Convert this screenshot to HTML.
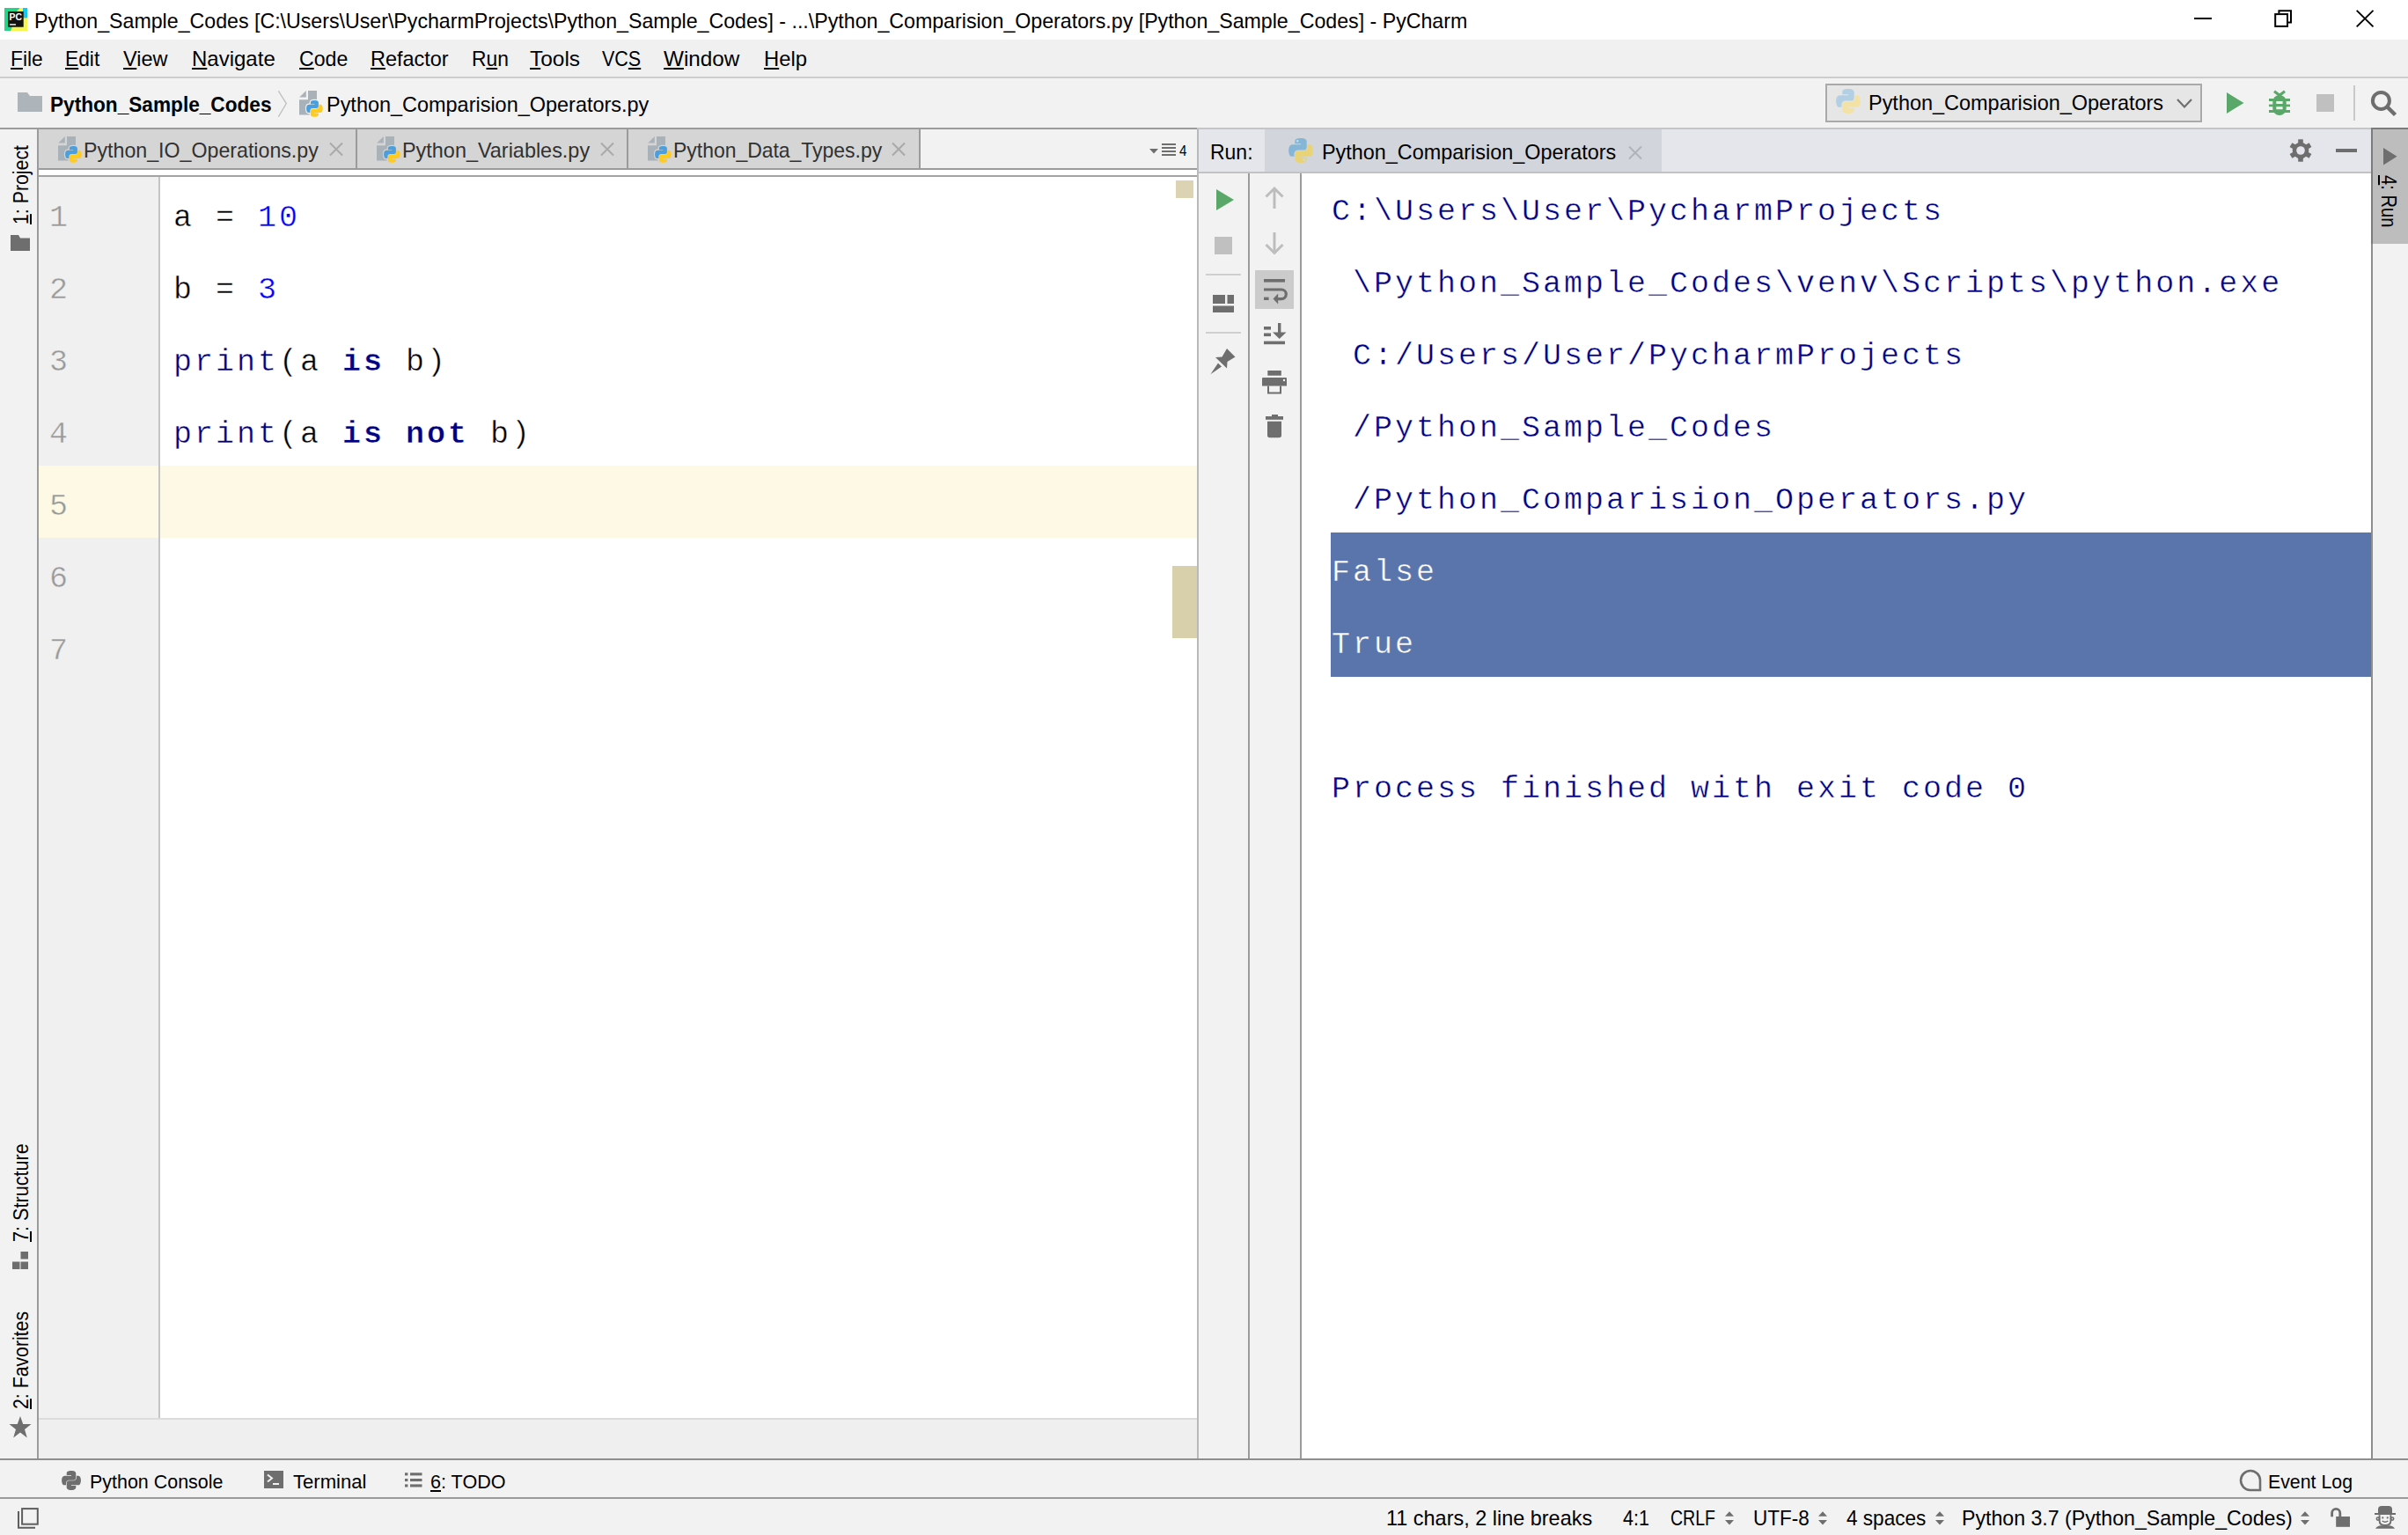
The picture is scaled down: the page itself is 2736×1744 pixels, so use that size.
<!DOCTYPE html>
<html><head><meta charset="utf-8">
<style>
*{box-sizing:border-box;margin:0;padding:0}
html,body{width:2736px;height:1744px;overflow:hidden;background:#f2f2f2}
body{position:relative;font-family:"Liberation Sans",sans-serif;color:#000}
.a{position:absolute}
.t{position:absolute;white-space:pre;line-height:1;transform-origin:0 0}
.m{font-family:"Liberation Mono",monospace}
.u{text-decoration:underline;text-underline-offset:2px;text-decoration-thickness:2px}
svg{position:absolute;overflow:visible}
</style></head><body>

<!-- TITLE BAR -->
<div class="a" style="left:0;top:0;width:2736px;height:45px;background:#fff"></div>
<svg style="left:5px;top:9px" width="26" height="26" viewBox="0 0 26 26">
<rect width="26" height="26" fill="#25d389"/>
<polygon points="14.2,3.8 17.6,0 26,0 26,26 7,26 8.6,21.8" fill="#f5f54e"/>
<rect x="21" y="0" width="5" height="11.4" fill="#14c8ee"/>
<rect x="4" y="4" width="17.7" height="17.7" fill="#121212"/>
<text x="5.6" y="13.6" font-family="Liberation Sans" font-weight="bold" font-size="10.4" fill="#fff">PC</text>
<rect x="6.1" y="18.2" width="6.9" height="1.4" fill="#fff"/>
</svg>
<!-- window controls -->
<div class="a" style="left:2493px;top:20px;width:20px;height:2px;background:#000"></div>
<svg style="left:2583px;top:10px" width="23" height="23" viewBox="0 0 23 23"><rect x="2.2" y="6.1" width="13.8" height="13.8" fill="none" stroke="#000" stroke-width="2"/><path d="M6.4 5.1V2.2H20V15.6H17" fill="none" stroke="#000" stroke-width="2"/></svg>
<svg style="left:2677px;top:11px" width="20" height="20" viewBox="0 0 20 20"><path d="M0.7 0.9L19.5 19.4M19.5 0.9L0.7 19.4" stroke="#000" stroke-width="1.9"/></svg>

<!-- MENU BAR -->
<div class="a" style="left:0;top:45px;width:2736px;height:42px;background:#f0f0f0"></div>
<div class="a" style="left:0;top:87px;width:2736px;height:2px;background:#cdcdcd"></div>

<!-- NAV BAR -->
<div class="a" style="left:0;top:89px;width:2736px;height:56px;background:#f2f2f2"></div>
<div class="a" style="left:0;top:145px;width:1360px;height:2px;background:#9b9b9b"></div>
<div class="a" style="left:1360px;top:145px;width:1334px;height:2px;background:#c4c5c8"></div>
<div class="a" style="left:2694px;top:145px;width:42px;height:2px;background:#7c7c7c"></div>

<!-- MAIN -->
<!-- left stripe -->
<div class="a" style="left:0;top:147px;width:43px;height:1510px;background:#f2f2f2"></div>
<div class="a" style="left:42px;top:147px;width:2px;height:1510px;background:#9b9b9b"></div>

<!-- editor tabs strip -->
<div class="a" style="left:44px;top:147px;width:1316px;height:44px;background:#f2f2f2"></div>
<div class="a" style="left:44px;top:147px;width:1001px;height:44px;background:#d5d5d5"></div>
<div class="a" style="left:44px;top:191px;width:1316px;height:2px;background:#9b9b9b"></div>
<div class="a" style="left:44px;top:193px;width:1316px;height:6px;background:#fff"></div>
<div class="a" style="left:44px;top:199px;width:1316px;height:2px;background:#a3a3a3"></div>
<div class="a" style="left:404px;top:147px;width:2px;height:44px;background:#9b9b9b"></div>
<div class="a" style="left:712px;top:147px;width:2px;height:44px;background:#9b9b9b"></div>
<div class="a" style="left:1044px;top:147px;width:2px;height:44px;background:#9b9b9b"></div>

<!-- editor content -->
<div class="a" style="left:44px;top:201px;width:136px;height:1410px;background:#f0f0f0"></div>
<div class="a" style="left:180px;top:201px;width:2px;height:1410px;background:#c4c4c4"></div>
<div class="a" style="left:182px;top:201px;width:1178px;height:1410px;background:#fff"></div>
<!-- current line -->
<div class="a" style="left:44px;top:529px;width:136px;height:82px;background:#fef9e4"></div>
<div class="a" style="left:182px;top:529px;width:1178px;height:82px;background:#fef9e4"></div>
<!-- h-scroll area -->
<div class="a" style="left:44px;top:1611px;width:1316px;height:2px;background:#dcdcdc"></div>
<div class="a" style="left:44px;top:1613px;width:1316px;height:44px;background:#efefef"></div>

<!-- divider -->
<div class="a" style="left:1360px;top:147px;width:2px;height:1510px;background:#b9b9b9"></div>

<!-- RUN PANEL -->
<div class="a" style="left:1362px;top:147px;width:1332px;height:48px;background:#e4e6ec"></div>
<div class="a" style="left:1437px;top:147px;width:451px;height:48px;background:#d2d5dc"></div>
<div class="a" style="left:1362px;top:195px;width:1332px;height:2px;background:#c2c2c2"></div>
<div class="a" style="left:1362px;top:197px;width:56px;height:1460px;background:#f2f2f2"></div>
<div class="a" style="left:1418px;top:197px;width:2px;height:1460px;background:#9b9b9b"></div>
<div class="a" style="left:1420px;top:197px;width:57px;height:1460px;background:#f2f2f2"></div>
<div class="a" style="left:1477px;top:197px;width:2px;height:1460px;background:#9b9b9b"></div>
<div class="a" style="left:1479px;top:197px;width:1215px;height:1460px;background:#fff"></div>
<!-- selection -->
<div class="a" style="left:1512px;top:605px;width:1182px;height:164px;background:#5a75ab"></div>

<!-- right stripe -->
<div class="a" style="left:2694px;top:147px;width:2px;height:1510px;background:#8e8e8e"></div>
<div class="a" style="left:2694px;top:147px;width:2px;height:130px;background:#7c7c7c"></div>
<div class="a" style="left:2696px;top:147px;width:40px;height:130px;background:#bdbdbd"></div>

<!-- bottom borders -->
<div class="a" style="left:0;top:1657px;width:2736px;height:2px;background:#8e8e8e"></div>
<div class="a" style="left:0;top:1701px;width:2736px;height:2px;background:#9b9b9b"></div>

<svg style="left:20px;top:105px" width="28" height="22" viewBox="0 0 28 22"><path d="M0 0H11L14 4H28V22H0Z" fill="#adb5bb"/></svg><svg style="left:315px;top:103px" width="12" height="30" viewBox="0 0 12 30"><path d="M1.4 0.3L10.3 14.6L1.4 29.6" fill="none" stroke="#bfbfbf" stroke-width="1.3"/></svg><svg style="left:334px;top:98px" width="32" height="36" viewBox="0 0 32 36"><polygon points="6.2,12.5 13.8,5 13.8,12.5" fill="#aab2b9"/><polygon points="16,5 26,5 26,32.6 6,32.6 6,15.2 16,15.2" fill="#aab2b9"/></svg><svg style="left:347.6px;top:114.2px" width="18.8" height="18.8" viewBox="0 0 111 112"><path d="M54.92,0 C50.33,0.02 45.96,0.41 42.11,1.09 C30.77,3.09 28.71,7.29 28.71,15.03 L28.71,25.25 L55.51,25.25 L55.51,28.66 L18.65,28.66 C10.86,28.66 4.04,33.34 1.91,42.25 C-0.55,52.46 -0.66,58.83 1.91,69.5 C3.81,77.44 8.35,83.1 16.14,83.1 L25.35,83.1 L25.35,70.85 C25.35,62 33.01,54.19 42.11,54.19 L68.88,54.19 C76.33,54.19 82.28,48.05 82.28,40.57 L82.28,15.03 C82.28,7.76 76.15,2.3 68.88,1.09 C64.28,0.32 59.5,-0.02 54.92,0 Z" fill="#f2f2f2" stroke="#f2f2f2" stroke-width="14.2"/><path d="M85.64,28.66 L85.64,40.57 C85.64,49.8 77.81,57.57 68.88,57.57 L42.11,57.57 C34.78,57.57 28.71,63.84 28.71,71.18 L28.71,96.72 C28.71,103.99 35.03,108.26 42.11,110.34 C50.59,112.83 58.73,113.28 68.88,110.34 C75.62,108.39 82.28,104.46 82.28,96.72 L82.28,86.5 L55.51,86.5 L55.51,83.1 L95.68,83.1 C103.47,83.1 106.37,77.66 109.08,69.5 C111.88,61.09 111.76,53.01 109.08,42.25 C107.16,34.5 103.49,28.66 95.68,28.66 Z" fill="#f2f2f2" stroke="#f2f2f2" stroke-width="14.2"/><path d="M54.92,0 C50.33,0.02 45.96,0.41 42.11,1.09 C30.77,3.09 28.71,7.29 28.71,15.03 L28.71,25.25 L55.51,25.25 L55.51,28.66 L18.65,28.66 C10.86,28.66 4.04,33.34 1.91,42.25 C-0.55,52.46 -0.66,58.83 1.91,69.5 C3.81,77.44 8.35,83.1 16.14,83.1 L25.35,83.1 L25.35,70.85 C25.35,62 33.01,54.19 42.11,54.19 L68.88,54.19 C76.33,54.19 82.28,48.05 82.28,40.57 L82.28,15.03 C82.28,7.76 76.15,2.3 68.88,1.09 C64.28,0.32 59.5,-0.02 54.92,0 Z" fill="#4a9fdc"/><path d="M85.64,28.66 L85.64,40.57 C85.64,49.8 77.81,57.57 68.88,57.57 L42.11,57.57 C34.78,57.57 28.71,63.84 28.71,71.18 L28.71,96.72 C28.71,103.99 35.03,108.26 42.11,110.34 C50.59,112.83 58.73,113.28 68.88,110.34 C75.62,108.39 82.28,104.46 82.28,96.72 L82.28,86.5 L55.51,86.5 L55.51,83.1 L95.68,83.1 C103.47,83.1 106.37,77.66 109.08,69.5 C111.88,61.09 111.76,53.01 109.08,42.25 C107.16,34.5 103.49,28.66 95.68,28.66 Z" fill="#ffcb1f"/></svg><svg style="left:60px;top:150px" width="32" height="36" viewBox="0 0 32 36"><polygon points="6.2,12.5 13.8,5 13.8,12.5" fill="#aab2b9"/><polygon points="16,5 26,5 26,32.6 6,32.6 6,15.2 16,15.2" fill="#aab2b9"/></svg><svg style="left:73.6px;top:166.2px" width="18.8" height="18.8" viewBox="0 0 111 112"><path d="M54.92,0 C50.33,0.02 45.96,0.41 42.11,1.09 C30.77,3.09 28.71,7.29 28.71,15.03 L28.71,25.25 L55.51,25.25 L55.51,28.66 L18.65,28.66 C10.86,28.66 4.04,33.34 1.91,42.25 C-0.55,52.46 -0.66,58.83 1.91,69.5 C3.81,77.44 8.35,83.1 16.14,83.1 L25.35,83.1 L25.35,70.85 C25.35,62 33.01,54.19 42.11,54.19 L68.88,54.19 C76.33,54.19 82.28,48.05 82.28,40.57 L82.28,15.03 C82.28,7.76 76.15,2.3 68.88,1.09 C64.28,0.32 59.5,-0.02 54.92,0 Z" fill="#d5d5d5" stroke="#d5d5d5" stroke-width="14.2"/><path d="M85.64,28.66 L85.64,40.57 C85.64,49.8 77.81,57.57 68.88,57.57 L42.11,57.57 C34.78,57.57 28.71,63.84 28.71,71.18 L28.71,96.72 C28.71,103.99 35.03,108.26 42.11,110.34 C50.59,112.83 58.73,113.28 68.88,110.34 C75.62,108.39 82.28,104.46 82.28,96.72 L82.28,86.5 L55.51,86.5 L55.51,83.1 L95.68,83.1 C103.47,83.1 106.37,77.66 109.08,69.5 C111.88,61.09 111.76,53.01 109.08,42.25 C107.16,34.5 103.49,28.66 95.68,28.66 Z" fill="#d5d5d5" stroke="#d5d5d5" stroke-width="14.2"/><path d="M54.92,0 C50.33,0.02 45.96,0.41 42.11,1.09 C30.77,3.09 28.71,7.29 28.71,15.03 L28.71,25.25 L55.51,25.25 L55.51,28.66 L18.65,28.66 C10.86,28.66 4.04,33.34 1.91,42.25 C-0.55,52.46 -0.66,58.83 1.91,69.5 C3.81,77.44 8.35,83.1 16.14,83.1 L25.35,83.1 L25.35,70.85 C25.35,62 33.01,54.19 42.11,54.19 L68.88,54.19 C76.33,54.19 82.28,48.05 82.28,40.57 L82.28,15.03 C82.28,7.76 76.15,2.3 68.88,1.09 C64.28,0.32 59.5,-0.02 54.92,0 Z" fill="#4a9fdc"/><path d="M85.64,28.66 L85.64,40.57 C85.64,49.8 77.81,57.57 68.88,57.57 L42.11,57.57 C34.78,57.57 28.71,63.84 28.71,71.18 L28.71,96.72 C28.71,103.99 35.03,108.26 42.11,110.34 C50.59,112.83 58.73,113.28 68.88,110.34 C75.62,108.39 82.28,104.46 82.28,96.72 L82.28,86.5 L55.51,86.5 L55.51,83.1 L95.68,83.1 C103.47,83.1 106.37,77.66 109.08,69.5 C111.88,61.09 111.76,53.01 109.08,42.25 C107.16,34.5 103.49,28.66 95.68,28.66 Z" fill="#ffcb1f"/></svg><svg style="left:374px;top:162px" width="16" height="15" viewBox="0 0 16 15"><path d="M1 0.5L15 14.5M15 0.5L1 14.5" stroke="#a9a9a9" stroke-width="2"/></svg><svg style="left:422px;top:150px" width="32" height="36" viewBox="0 0 32 36"><polygon points="6.2,12.5 13.8,5 13.8,12.5" fill="#aab2b9"/><polygon points="16,5 26,5 26,32.6 6,32.6 6,15.2 16,15.2" fill="#aab2b9"/></svg><svg style="left:435.6px;top:166.2px" width="18.8" height="18.8" viewBox="0 0 111 112"><path d="M54.92,0 C50.33,0.02 45.96,0.41 42.11,1.09 C30.77,3.09 28.71,7.29 28.71,15.03 L28.71,25.25 L55.51,25.25 L55.51,28.66 L18.65,28.66 C10.86,28.66 4.04,33.34 1.91,42.25 C-0.55,52.46 -0.66,58.83 1.91,69.5 C3.81,77.44 8.35,83.1 16.14,83.1 L25.35,83.1 L25.35,70.85 C25.35,62 33.01,54.19 42.11,54.19 L68.88,54.19 C76.33,54.19 82.28,48.05 82.28,40.57 L82.28,15.03 C82.28,7.76 76.15,2.3 68.88,1.09 C64.28,0.32 59.5,-0.02 54.92,0 Z" fill="#d5d5d5" stroke="#d5d5d5" stroke-width="14.2"/><path d="M85.64,28.66 L85.64,40.57 C85.64,49.8 77.81,57.57 68.88,57.57 L42.11,57.57 C34.78,57.57 28.71,63.84 28.71,71.18 L28.71,96.72 C28.71,103.99 35.03,108.26 42.11,110.34 C50.59,112.83 58.73,113.28 68.88,110.34 C75.62,108.39 82.28,104.46 82.28,96.72 L82.28,86.5 L55.51,86.5 L55.51,83.1 L95.68,83.1 C103.47,83.1 106.37,77.66 109.08,69.5 C111.88,61.09 111.76,53.01 109.08,42.25 C107.16,34.5 103.49,28.66 95.68,28.66 Z" fill="#d5d5d5" stroke="#d5d5d5" stroke-width="14.2"/><path d="M54.92,0 C50.33,0.02 45.96,0.41 42.11,1.09 C30.77,3.09 28.71,7.29 28.71,15.03 L28.71,25.25 L55.51,25.25 L55.51,28.66 L18.65,28.66 C10.86,28.66 4.04,33.34 1.91,42.25 C-0.55,52.46 -0.66,58.83 1.91,69.5 C3.81,77.44 8.35,83.1 16.14,83.1 L25.35,83.1 L25.35,70.85 C25.35,62 33.01,54.19 42.11,54.19 L68.88,54.19 C76.33,54.19 82.28,48.05 82.28,40.57 L82.28,15.03 C82.28,7.76 76.15,2.3 68.88,1.09 C64.28,0.32 59.5,-0.02 54.92,0 Z" fill="#4a9fdc"/><path d="M85.64,28.66 L85.64,40.57 C85.64,49.8 77.81,57.57 68.88,57.57 L42.11,57.57 C34.78,57.57 28.71,63.84 28.71,71.18 L28.71,96.72 C28.71,103.99 35.03,108.26 42.11,110.34 C50.59,112.83 58.73,113.28 68.88,110.34 C75.62,108.39 82.28,104.46 82.28,96.72 L82.28,86.5 L55.51,86.5 L55.51,83.1 L95.68,83.1 C103.47,83.1 106.37,77.66 109.08,69.5 C111.88,61.09 111.76,53.01 109.08,42.25 C107.16,34.5 103.49,28.66 95.68,28.66 Z" fill="#ffcb1f"/></svg><svg style="left:682px;top:162px" width="16" height="15" viewBox="0 0 16 15"><path d="M1 0.5L15 14.5M15 0.5L1 14.5" stroke="#a9a9a9" stroke-width="2"/></svg><svg style="left:730px;top:150px" width="32" height="36" viewBox="0 0 32 36"><polygon points="6.2,12.5 13.8,5 13.8,12.5" fill="#aab2b9"/><polygon points="16,5 26,5 26,32.6 6,32.6 6,15.2 16,15.2" fill="#aab2b9"/></svg><svg style="left:743.6px;top:166.2px" width="18.8" height="18.8" viewBox="0 0 111 112"><path d="M54.92,0 C50.33,0.02 45.96,0.41 42.11,1.09 C30.77,3.09 28.71,7.29 28.71,15.03 L28.71,25.25 L55.51,25.25 L55.51,28.66 L18.65,28.66 C10.86,28.66 4.04,33.34 1.91,42.25 C-0.55,52.46 -0.66,58.83 1.91,69.5 C3.81,77.44 8.35,83.1 16.14,83.1 L25.35,83.1 L25.35,70.85 C25.35,62 33.01,54.19 42.11,54.19 L68.88,54.19 C76.33,54.19 82.28,48.05 82.28,40.57 L82.28,15.03 C82.28,7.76 76.15,2.3 68.88,1.09 C64.28,0.32 59.5,-0.02 54.92,0 Z" fill="#d5d5d5" stroke="#d5d5d5" stroke-width="14.2"/><path d="M85.64,28.66 L85.64,40.57 C85.64,49.8 77.81,57.57 68.88,57.57 L42.11,57.57 C34.78,57.57 28.71,63.84 28.71,71.18 L28.71,96.72 C28.71,103.99 35.03,108.26 42.11,110.34 C50.59,112.83 58.73,113.28 68.88,110.34 C75.62,108.39 82.28,104.46 82.28,96.72 L82.28,86.5 L55.51,86.5 L55.51,83.1 L95.68,83.1 C103.47,83.1 106.37,77.66 109.08,69.5 C111.88,61.09 111.76,53.01 109.08,42.25 C107.16,34.5 103.49,28.66 95.68,28.66 Z" fill="#d5d5d5" stroke="#d5d5d5" stroke-width="14.2"/><path d="M54.92,0 C50.33,0.02 45.96,0.41 42.11,1.09 C30.77,3.09 28.71,7.29 28.71,15.03 L28.71,25.25 L55.51,25.25 L55.51,28.66 L18.65,28.66 C10.86,28.66 4.04,33.34 1.91,42.25 C-0.55,52.46 -0.66,58.83 1.91,69.5 C3.81,77.44 8.35,83.1 16.14,83.1 L25.35,83.1 L25.35,70.85 C25.35,62 33.01,54.19 42.11,54.19 L68.88,54.19 C76.33,54.19 82.28,48.05 82.28,40.57 L82.28,15.03 C82.28,7.76 76.15,2.3 68.88,1.09 C64.28,0.32 59.5,-0.02 54.92,0 Z" fill="#4a9fdc"/><path d="M85.64,28.66 L85.64,40.57 C85.64,49.8 77.81,57.57 68.88,57.57 L42.11,57.57 C34.78,57.57 28.71,63.84 28.71,71.18 L28.71,96.72 C28.71,103.99 35.03,108.26 42.11,110.34 C50.59,112.83 58.73,113.28 68.88,110.34 C75.62,108.39 82.28,104.46 82.28,96.72 L82.28,86.5 L55.51,86.5 L55.51,83.1 L95.68,83.1 C103.47,83.1 106.37,77.66 109.08,69.5 C111.88,61.09 111.76,53.01 109.08,42.25 C107.16,34.5 103.49,28.66 95.68,28.66 Z" fill="#ffcb1f"/></svg><svg style="left:1013px;top:162px" width="16" height="15" viewBox="0 0 16 15"><path d="M1 0.5L15 14.5M15 0.5L1 14.5" stroke="#a9a9a9" stroke-width="2"/></svg><svg style="left:1306px;top:163px" width="44" height="16" viewBox="0 0 44 16"><polygon points="0,6 10,6 5,11.5" fill="#6e6e6e"/><rect x="14" y="0" width="16" height="2" fill="#6e6e6e"/><rect x="14" y="4" width="16" height="2" fill="#6e6e6e"/><rect x="14" y="8" width="16" height="2" fill="#6e6e6e"/><rect x="14" y="12" width="16" height="2" fill="#6e6e6e"/></svg><div class="a" style="left:1336px;top:205px;width:20px;height:20px;background:#dbd3b1"></div><div class="a" style="left:1332px;top:643px;width:28px;height:82px;background:#d8cfab"></div><div class="a" style="left:2074px;top:95px;width:428px;height:44px;background:#e6e6e6;border:2px solid #a9a9a9"></div><svg style="left:2086px;top:101px" width="28" height="28" viewBox="0 0 111 112"><path d="M54.92,0 C50.33,0.02 45.96,0.41 42.11,1.09 C30.77,3.09 28.71,7.29 28.71,15.03 L28.71,25.25 L55.51,25.25 L55.51,28.66 L18.65,28.66 C10.86,28.66 4.04,33.34 1.91,42.25 C-0.55,52.46 -0.66,58.83 1.91,69.5 C3.81,77.44 8.35,83.1 16.14,83.1 L25.35,83.1 L25.35,70.85 C25.35,62 33.01,54.19 42.11,54.19 L68.88,54.19 C76.33,54.19 82.28,48.05 82.28,40.57 L82.28,15.03 C82.28,7.76 76.15,2.3 68.88,1.09 C64.28,0.32 59.5,-0.02 54.92,0 Z" fill="#b3cfe4"/><path d="M85.64,28.66 L85.64,40.57 C85.64,49.8 77.81,57.57 68.88,57.57 L42.11,57.57 C34.78,57.57 28.71,63.84 28.71,71.18 L28.71,96.72 C28.71,103.99 35.03,108.26 42.11,110.34 C50.59,112.83 58.73,113.28 68.88,110.34 C75.62,108.39 82.28,104.46 82.28,96.72 L82.28,86.5 L55.51,86.5 L55.51,83.1 L95.68,83.1 C103.47,83.1 106.37,77.66 109.08,69.5 C111.88,61.09 111.76,53.01 109.08,42.25 C107.16,34.5 103.49,28.66 95.68,28.66 Z" fill="#f3e2a6"/></svg><svg style="left:2473px;top:112px" width="18" height="11" viewBox="0 0 18 11"><path d="M1 1L9 9.5L17 1" fill="none" stroke="#6e6e6e" stroke-width="2.2"/></svg><svg style="left:2530px;top:105px" width="20" height="24" viewBox="0 0 20 24"><polygon points="0,0 19.5,12 0,24" fill="#59a869"/></svg><svg style="left:2578px;top:103px" width="24" height="28" viewBox="0 0 24 28" fill="#59a869"><path d="M6 0.8L12 5.3L18 0.8" fill="none" stroke="#59a869" stroke-width="3.2"/><path d="M4.3 12.5A7.7 7.5 0 0 1 19.7 12.5V20.5A7.7 7.5 0 0 1 4.3 20.5Z"/><rect x="0" y="9" width="24" height="3"/><rect x="0" y="15.6" width="24" height="2.6"/><rect x="0" y="22" width="24" height="3"/><rect x="8.3" y="12" width="7.3" height="3" fill="#f2f2f2"/><rect x="8.3" y="18.2" width="7.3" height="3" fill="#f2f2f2"/></svg><div class="a" style="left:2632px;top:107px;width:20px;height:20px;background:#c0c0c0"></div><div class="a" style="left:2674px;top:97px;width:2px;height:40px;background:#c9c9c9"></div><svg style="left:2694px;top:103px" width="30" height="30" viewBox="0 0 30 30"><circle cx="11.4" cy="11.4" r="9.5" fill="none" stroke="#6e6e6e" stroke-width="4"/><path d="M18 18L27.5 27.5" stroke="#6e6e6e" stroke-width="4.5"/></svg><svg style="left:1464px;top:157px" width="28" height="28" viewBox="0 0 111 112"><path d="M54.92,0 C50.33,0.02 45.96,0.41 42.11,1.09 C30.77,3.09 28.71,7.29 28.71,15.03 L28.71,25.25 L55.51,25.25 L55.51,28.66 L18.65,28.66 C10.86,28.66 4.04,33.34 1.91,42.25 C-0.55,52.46 -0.66,58.83 1.91,69.5 C3.81,77.44 8.35,83.1 16.14,83.1 L25.35,83.1 L25.35,70.85 C25.35,62 33.01,54.19 42.11,54.19 L68.88,54.19 C76.33,54.19 82.28,48.05 82.28,40.57 L82.28,15.03 C82.28,7.76 76.15,2.3 68.88,1.09 C64.28,0.32 59.5,-0.02 54.92,0 Z" fill="#86b6d6"/><path d="M85.64,28.66 L85.64,40.57 C85.64,49.8 77.81,57.57 68.88,57.57 L42.11,57.57 C34.78,57.57 28.71,63.84 28.71,71.18 L28.71,96.72 C28.71,103.99 35.03,108.26 42.11,110.34 C50.59,112.83 58.73,113.28 68.88,110.34 C75.62,108.39 82.28,104.46 82.28,96.72 L82.28,86.5 L55.51,86.5 L55.51,83.1 L95.68,83.1 C103.47,83.1 106.37,77.66 109.08,69.5 C111.88,61.09 111.76,53.01 109.08,42.25 C107.16,34.5 103.49,28.66 95.68,28.66 Z" fill="#e8d477"/><path d="M40.42,8.22 C43.19,8.22 45.45,10.52 45.45,13.34 C45.45,16.16 43.19,18.43 40.42,18.43 C37.64,18.43 35.39,16.16 35.39,13.34 C35.39,10.52 37.64,8.22 40.42,8.22 Z" fill="#c8dcea"/><path d="M70.58,93.29 C73.36,93.29 75.61,95.56 75.61,98.38 C75.61,101.21 73.36,103.5 70.58,103.5 C67.81,103.5 65.55,101.21 65.55,98.38 C65.55,95.56 67.81,93.29 70.58,93.29 Z" fill="#c8dcea"/></svg><svg style="left:1850px;top:165.5px" width="16" height="15" viewBox="0 0 16 15"><path d="M1 0.5L15 14.5M15 0.5L1 14.5" stroke="#b0b3b6" stroke-width="1.9"/></svg><svg style="left:2601px;top:158px" width="26" height="26" viewBox="-13 -13 26 26"><g fill="#6e6e6e"><rect x="-2.8" y="-12.7" width="5.6" height="25.4"/><rect x="-2.8" y="-12.7" width="5.6" height="25.4" transform="rotate(60)"/><rect x="-2.8" y="-12.7" width="5.6" height="25.4" transform="rotate(120)"/><circle r="9.3"/></g><circle r="4.8" fill="#e4e6ec"/></svg><div class="a" style="left:2654px;top:169px;width:24px;height:4px;background:#6e6e6e"></div><svg style="left:2708px;top:168px" width="16" height="20" viewBox="0 0 16 20"><polygon points="0,0 15.5,9.7 0,19.4" fill="#6e6e6e"/></svg><svg style="left:1382px;top:215px" width="20" height="24" viewBox="0 0 20 24"><polygon points="0,0 20,12 0,24" fill="#59a869"/></svg><div class="a" style="left:1380px;top:269px;width:20px;height:20px;background:#c0c0c0"></div><div class="a" style="left:1370px;top:311px;width:40px;height:2px;background:#cfcfcf"></div><svg style="left:1378px;top:335px" width="24" height="20" viewBox="0 0 24 20" fill="#6e6e6e"><rect x="0" y="0" width="14" height="10"/><rect x="16.5" y="0" width="7.5" height="10"/><rect x="0" y="12.5" width="24" height="7.5"/></svg><div class="a" style="left:1370px;top:377px;width:40px;height:2px;background:#cfcfcf"></div><svg style="left:1375px;top:396px" width="30" height="30" viewBox="0 0 30 30" fill="#6e6e6e"><polygon points="19,0 28.5,9.5 19.5,15 19,22.5 6,10 13.5,9.5"/><polygon points="0.4,29.2 9,16.4 13,20.4"/></svg><svg style="left:1437px;top:212px" width="22" height="26" viewBox="0 0 22 26"><path d="M11 2V25M1.5 11.5L11 2L20.5 11.5" fill="none" stroke="#bdbdbd" stroke-width="3"/></svg><svg style="left:1437px;top:264px" width="22" height="26" viewBox="0 0 22 26"><path d="M11 0V23.5M1.5 14L11 23.5L20.5 14" fill="none" stroke="#bdbdbd" stroke-width="3"/></svg><div class="a" style="left:1426px;top:307px;width:44px;height:44px;background:#cbcbcb"></div><svg style="left:1436px;top:317px" width="28" height="30" viewBox="0 0 28 30" fill="#6e6e6e"><rect x="0" y="0" width="24" height="3.6"/><path d="M0 12H20A5.3 5.3 0 0 1 20 22.6H14.5" fill="none" stroke="#6e6e6e" stroke-width="3.2"/><polygon points="10.5,22.6 16.2,16.6 16.2,28.4"/><rect x="0" y="20.6" width="5.6" height="3.4"/></svg><svg style="left:1436px;top:367px" width="26" height="26" viewBox="0 0 26 26" fill="#6e6e6e"><rect x="0" y="4" width="8" height="3.6"/><rect x="0" y="11.5" width="8" height="3.6"/><rect x="0" y="20.6" width="24" height="3.6"/><rect x="16" y="0" width="3.4" height="13"/><polygon points="10,10.5 25.5,10.5 17.7,18"/></svg><svg style="left:1434px;top:421px" width="28" height="27" viewBox="0 0 28 27" fill="#6e6e6e"><rect x="6.3" y="0" width="15.5" height="5.7"/><path d="M1 8H27A1 1 0 0 1 28 9V17.5H0V9A1 1 0 0 1 1 8Z"/><circle cx="25" cy="11" r="1.2" fill="#f2f2f2"/><path d="M7 17.5V25.5H21V17.5" fill="none" stroke="#6e6e6e" stroke-width="2"/></svg><svg style="left:1438px;top:471px" width="21" height="27" viewBox="0 0 21 27" fill="#6e6e6e"><rect x="7" y="0" width="7" height="2"/><rect x="0" y="2" width="20" height="3.8"/><path d="M2 7.8H18V23.5Q18 26.2 15.3 26.2H4.7Q2 26.2 2 23.5Z"/></svg><svg style="left:12px;top:267px" width="22" height="18" viewBox="0 0 22 18"><path d="M0 0H9L11 3.5H22V18H0Z" fill="#6e6e6e"/></svg><svg style="left:14px;top:1422px" width="18" height="20" viewBox="0 0 18 20" fill="#6e6e6e"><rect x="9.5" y="0" width="8.5" height="8.5"/><rect x="0" y="11.5" width="8.5" height="8.5"/><rect x="9.5" y="11.5" width="8.5" height="8.5"/></svg><svg style="left:10px;top:1609px" width="26" height="25" viewBox="0 0 26 25"><polygon points="13,0 16.2,9.1 25.5,9.1 18,14.9 20.8,24.5 13,18.6 5.2,24.5 8,14.9 0.5,9.1 9.8,9.1" fill="#6e6e6e"/></svg><svg style="left:70px;top:1671px" width="22" height="22" viewBox="0 0 111 112"><path d="M54.92,0 C50.33,0.02 45.96,0.41 42.11,1.09 C30.77,3.09 28.71,7.29 28.71,15.03 L28.71,25.25 L55.51,25.25 L55.51,28.66 L18.65,28.66 C10.86,28.66 4.04,33.34 1.91,42.25 C-0.55,52.46 -0.66,58.83 1.91,69.5 C3.81,77.44 8.35,83.1 16.14,83.1 L25.35,83.1 L25.35,70.85 C25.35,62 33.01,54.19 42.11,54.19 L68.88,54.19 C76.33,54.19 82.28,48.05 82.28,40.57 L82.28,15.03 C82.28,7.76 76.15,2.3 68.88,1.09 C64.28,0.32 59.5,-0.02 54.92,0 Z" fill="#6e6e6e"/><path d="M85.64,28.66 L85.64,40.57 C85.64,49.8 77.81,57.57 68.88,57.57 L42.11,57.57 C34.78,57.57 28.71,63.84 28.71,71.18 L28.71,96.72 C28.71,103.99 35.03,108.26 42.11,110.34 C50.59,112.83 58.73,113.28 68.88,110.34 C75.62,108.39 82.28,104.46 82.28,96.72 L82.28,86.5 L55.51,86.5 L55.51,83.1 L95.68,83.1 C103.47,83.1 106.37,77.66 109.08,69.5 C111.88,61.09 111.76,53.01 109.08,42.25 C107.16,34.5 103.49,28.66 95.68,28.66 Z" fill="#6e6e6e"/></svg><svg style="left:300px;top:1671px" width="22" height="20" viewBox="0 0 22 20"><rect width="22" height="20" fill="#6e6e6e"/><path d="M4 4.5L9 8.5L4 12.5" fill="none" stroke="#f2f2f2" stroke-width="2"/><rect x="10" y="14" width="7" height="2" fill="#f2f2f2"/></svg><svg style="left:460px;top:1672px" width="20" height="18" viewBox="0 0 20 18" fill="#6e6e6e"><rect x="0" y="1.3" width="3.4" height="3.1"/><rect x="6" y="1.3" width="13.5" height="3.1"/><rect x="0" y="8" width="3.4" height="3.1"/><rect x="6" y="8" width="13.5" height="3.1"/><rect x="0" y="14.4" width="3.4" height="3.1"/><rect x="6" y="14.4" width="13.5" height="3.1"/></svg><svg style="left:2544px;top:1669px" width="26" height="26" viewBox="0 0 26 26"><path d="M24 24H12.5A11 11 0 1 1 24 12.5Z" fill="none" stroke="#6e6e6e" stroke-width="2.6"/></svg><svg style="left:20px;top:1713px" width="25" height="24" viewBox="0 0 25 24"><rect x="5.1" y="1.1" width="17.7" height="17.6" fill="none" stroke="#5e5e5e" stroke-width="2"/><path d="M1 4V22.8H20" fill="none" stroke="#5e5e5e" stroke-width="2"/></svg><svg style="left:1960px;top:1717px" width="11" height="18" viewBox="0 0 11 18" fill="#6e6e6e"><polygon points="5,0.3 10,5.8 0,5.8"/><polygon points="0,10 10,10 5,15.5"/></svg><svg style="left:2066px;top:1717px" width="11" height="18" viewBox="0 0 11 18" fill="#6e6e6e"><polygon points="5,0.3 10,5.8 0,5.8"/><polygon points="0,10 10,10 5,15.5"/></svg><svg style="left:2198.5px;top:1717px" width="11" height="18" viewBox="0 0 11 18" fill="#6e6e6e"><polygon points="5,0.3 10,5.8 0,5.8"/><polygon points="0,10 10,10 5,15.5"/></svg><svg style="left:2614px;top:1717px" width="11" height="18" viewBox="0 0 11 18" fill="#6e6e6e"><polygon points="5,0.3 10,5.8 0,5.8"/><polygon points="0,10 10,10 5,15.5"/></svg><svg style="left:2648px;top:1713px" width="23" height="22" viewBox="0 0 23 22"><path d="M1.6 10.3V6A4.6 4.6 0 0 1 10.8 6V10.3" fill="none" stroke="#6e6e6e" stroke-width="2.8"/><rect x="6.2" y="10" width="15.8" height="11.8" fill="#6e6e6e"/></svg><svg style="left:2698px;top:1711px" width="24" height="26" viewBox="0 0 24 26" fill="#6e6e6e"><path d="M4 8.2V4Q4 0 8 0H16Q20 0 20 4V8.2Z"/><rect x="0" y="8" width="24" height="2"/><path d="M5.6 10.2V17Q5.6 22 12 22Q18.4 22 18.4 17V10.2" fill="none" stroke="#6e6e6e" stroke-width="1.9"/><circle cx="3.9" cy="14.6" r="1.6" fill="none" stroke="#6e6e6e" stroke-width="1.6"/><circle cx="20.1" cy="14.6" r="1.6" fill="none" stroke="#6e6e6e" stroke-width="1.6"/><circle cx="9.3" cy="13.4" r="1.1"/><circle cx="14.7" cy="13.4" r="1.1"/><path d="M8.6 17Q12 19.6 15.4 17" fill="none" stroke="#6e6e6e" stroke-width="1.5"/><path d="M1 25.8Q3 22.2 7.5 22.2H16.5Q21 22.2 23 25.8Z"/></svg>
<div class="t" style="left:38.87px;top:12.00px;font-family:'Liberation Sans';font-size:24px;transform:scaleX(0.9657);">Python_Sample_Codes [C:\Users\User\PycharmProjects\Python_Sample_Codes] - ...\Python_Comparision_Operators.py [Python_Sample_Codes] - PyCharm</div>
<div class="t" style="left:12.01px;top:55.00px;font-family:'Liberation Sans';font-size:24px;transform:scaleX(0.9472);"><span class="u">F</span>ile</div>
<div class="t" style="left:74.10px;top:55.00px;font-family:'Liberation Sans';font-size:24px;transform:scaleX(0.9487);"><span class="u">E</span>dit</div>
<div class="t" style="left:140.00px;top:55.00px;font-family:'Liberation Sans';font-size:24px;transform:scaleX(0.9808);"><span class="u">V</span>iew</div>
<div class="t" style="left:218.00px;top:55.00px;font-family:'Liberation Sans';font-size:24px;"><span class="u">N</span>avigate</div>
<div class="t" style="left:340.04px;top:55.00px;font-family:'Liberation Sans';font-size:24px;transform:scaleX(0.9643);"><span class="u">C</span>ode</div>
<div class="t" style="left:421.04px;top:55.00px;font-family:'Liberation Sans';font-size:24px;transform:scaleX(0.9775);"><span class="u">R</span>efactor</div>
<div class="t" style="left:536.10px;top:55.00px;font-family:'Liberation Sans';font-size:24px;transform:scaleX(0.9512);">R<span class="u">u</span>n</div>
<div class="t" style="left:602.00px;top:55.00px;font-family:'Liberation Sans';font-size:24px;transform:scaleX(1.0182);"><span class="u">T</span>ools</div>
<div class="t" style="left:684.00px;top:55.00px;font-family:'Liberation Sans';font-size:24px;transform:scaleX(0.8958);">VC<span class="u">S</span></div>
<div class="t" style="left:754.00px;top:55.00px;font-family:'Liberation Sans';font-size:24px;transform:scaleX(1.0116);"><span class="u">W</span>indow</div>
<div class="t" style="left:868.02px;top:55.00px;font-family:'Liberation Sans';font-size:24px;transform:scaleX(0.9915);"><span class="u">H</span>elp</div>
<div class="t" style="left:56.96px;top:107.00px;font-family:'Liberation Sans';font-size:24px;font-weight:bold;transform:scaleX(0.9430);">Python_Sample_Codes</div>
<div class="t" style="left:370.55px;top:107.00px;font-family:'Liberation Sans';font-size:24px;transform:scaleX(0.9772);">Python_Comparision_Operators.py</div>
<div class="t" style="left:95.37px;top:159.00px;font-family:'Liberation Sans';font-size:24px;color:#313131;transform:scaleX(0.9661);">Python_IO_Operations.py</div>
<div class="t" style="left:457.05px;top:159.00px;font-family:'Liberation Sans';font-size:24px;color:#313131;transform:scaleX(0.9759);">Python_Variables.py</div>
<div class="t" style="left:764.99px;top:159.00px;font-family:'Liberation Sans';font-size:24px;color:#313131;transform:scaleX(0.9557);">Python_Data_Types.py</div>
<div class="t" style="left:1375.09px;top:161.00px;font-family:'Liberation Sans';font-size:24px;transform:scaleX(0.9574);">Run:</div>
<div class="t" style="left:1501.85px;top:161.00px;font-family:'Liberation Sans';font-size:24px;transform:scaleX(0.9750);">Python_Comparision_Operators</div>
<div class="t" style="left:2123.05px;top:105.00px;font-family:'Liberation Sans';font-size:24px;transform:scaleX(0.9774);">Python_Comparision_Operators</div>
<div class="t" style="left:101.85px;top:1673.00px;font-family:'Liberation Sans';font-size:22px;transform:scaleX(0.9750);">Python Console</div>
<div class="t" style="left:332.70px;top:1673.00px;font-family:'Liberation Sans';font-size:22px;transform:scaleX(1.0037);">Terminal</div>
<div class="t" style="left:488.72px;top:1673.00px;font-family:'Liberation Sans';font-size:22px;transform:scaleX(0.9800);"><span class="u">6</span>: TODO</div>
<div class="t" style="left:2577.06px;top:1673.00px;font-family:'Liberation Sans';font-size:22px;transform:scaleX(0.9688);">Event Log</div>
<div class="t" style="left:1574.55px;top:1713.00px;font-family:'Liberation Sans';font-size:24px;transform:scaleX(0.9768);">11 chars, 2 line breaks</div>
<div class="t" style="left:1844.00px;top:1713.00px;font-family:'Liberation Sans';font-size:24px;transform:scaleX(0.8969);">4:1</div>
<div class="t" style="left:1898.19px;top:1713.00px;font-family:'Liberation Sans';font-size:24px;transform:scaleX(0.8148);">CRLF</div>
<div class="t" style="left:1991.72px;top:1713.00px;font-family:'Liberation Sans';font-size:24px;transform:scaleX(0.9385);">UTF-8</div>
<div class="t" style="left:2097.70px;top:1713.00px;font-family:'Liberation Sans';font-size:24px;transform:scaleX(0.9400);">4 spaces</div>
<div class="t" style="left:2228.77px;top:1713.00px;font-family:'Liberation Sans';font-size:24px;transform:scaleX(0.9645);">Python 3.7 (Python_Sample_Codes)</div>
<div class="t" style="left:197.00px;top:231.00px;font-family:'Liberation Mono';font-size:35px;color:#000;letter-spacing:3px;-webkit-text-stroke:0.45px #fff;paint-order:fill;">a = <span style="color:#0000ff">10</span></div>
<div class="t" style="left:197.00px;top:313.00px;font-family:'Liberation Mono';font-size:35px;color:#000;letter-spacing:3px;-webkit-text-stroke:0.45px #fff;paint-order:fill;">b = <span style="color:#0000ff">3</span></div>
<div class="t" style="left:197.00px;top:395.00px;font-family:'Liberation Mono';font-size:35px;color:#000;letter-spacing:3px;-webkit-text-stroke:0.45px #fff;paint-order:fill;"><span style="color:#000080">print</span>(a <span style="color:#000080;font-weight:bold">is</span> b)</div>
<div class="t" style="left:197.00px;top:477.00px;font-family:'Liberation Mono';font-size:35px;color:#000;letter-spacing:3px;-webkit-text-stroke:0.45px #fff;paint-order:fill;"><span style="color:#000080">print</span>(a <span style="color:#000080;font-weight:bold">is</span> <span style="color:#000080;font-weight:bold">not</span> b)</div>
<div class="t" style="left:56.00px;top:231.00px;font-family:'Liberation Mono';font-size:35px;color:#999999;letter-spacing:3px;-webkit-text-stroke:0.45px #f0f0f0;paint-order:fill;">1</div>
<div class="t" style="left:56.00px;top:313.00px;font-family:'Liberation Mono';font-size:35px;color:#999999;letter-spacing:3px;-webkit-text-stroke:0.45px #f0f0f0;paint-order:fill;">2</div>
<div class="t" style="left:56.00px;top:395.00px;font-family:'Liberation Mono';font-size:35px;color:#999999;letter-spacing:3px;-webkit-text-stroke:0.45px #f0f0f0;paint-order:fill;">3</div>
<div class="t" style="left:56.00px;top:477.00px;font-family:'Liberation Mono';font-size:35px;color:#999999;letter-spacing:3px;-webkit-text-stroke:0.45px #f0f0f0;paint-order:fill;">4</div>
<div class="t" style="left:56.00px;top:559.00px;font-family:'Liberation Mono';font-size:35px;color:#999999;letter-spacing:3px;-webkit-text-stroke:0.45px #fef9e4;paint-order:fill;">5</div>
<div class="t" style="left:56.00px;top:641.00px;font-family:'Liberation Mono';font-size:35px;color:#999999;letter-spacing:3px;-webkit-text-stroke:0.45px #f0f0f0;paint-order:fill;">6</div>
<div class="t" style="left:56.00px;top:723.00px;font-family:'Liberation Mono';font-size:35px;color:#999999;letter-spacing:3px;-webkit-text-stroke:0.45px #f0f0f0;paint-order:fill;">7</div>
<div class="t" style="left:1513.00px;top:224.00px;font-family:'Liberation Mono';font-size:35px;color:#000080;letter-spacing:3px;-webkit-text-stroke:0.45px #fff;paint-order:fill;">C:\Users\User\PycharmProjects</div>
<div class="t" style="left:1513.00px;top:306.00px;font-family:'Liberation Mono';font-size:35px;color:#000080;letter-spacing:3px;-webkit-text-stroke:0.45px #fff;paint-order:fill;"> \Python_Sample_Codes\venv\Scripts\python.exe</div>
<div class="t" style="left:1513.00px;top:388.00px;font-family:'Liberation Mono';font-size:35px;color:#000080;letter-spacing:3px;-webkit-text-stroke:0.45px #fff;paint-order:fill;"> C:/Users/User/PycharmProjects</div>
<div class="t" style="left:1513.00px;top:470.00px;font-family:'Liberation Mono';font-size:35px;color:#000080;letter-spacing:3px;-webkit-text-stroke:0.45px #fff;paint-order:fill;"> /Python_Sample_Codes</div>
<div class="t" style="left:1513.00px;top:552.00px;font-family:'Liberation Mono';font-size:35px;color:#000080;letter-spacing:3px;-webkit-text-stroke:0.45px #fff;paint-order:fill;"> /Python_Comparision_Operators.py</div>
<div class="t" style="left:1513.00px;top:634.00px;font-family:'Liberation Mono';font-size:35px;color:#fff;letter-spacing:3px;-webkit-text-stroke:0.45px #5a75ab;paint-order:fill;">False</div>
<div class="t" style="left:1513.00px;top:716.00px;font-family:'Liberation Mono';font-size:35px;color:#fff;letter-spacing:3px;-webkit-text-stroke:0.45px #5a75ab;paint-order:fill;">True</div>
<div class="t" style="left:1513.00px;top:880.00px;font-family:'Liberation Mono';font-size:35px;color:#000080;letter-spacing:3px;-webkit-text-stroke:0.45px #fff;paint-order:fill;">Process finished with exit code 0</div>
<div class="t" style="left:13.00px;top:254.85px;font-family:'Liberation Sans';font-size:23px;transform:rotate(-90deg) scaleX(0.9263);"><span class="u">1</span>: Project</div>
<div class="t" style="left:13.00px;top:1410.94px;font-family:'Liberation Sans';font-size:23px;transform:rotate(-90deg) scaleX(0.9402);"><span class="u">7</span>: Structure</div>
<div class="t" style="left:13.00px;top:1600.92px;font-family:'Liberation Sans';font-size:23px;transform:rotate(-90deg) scaleX(0.9244);"><span class="u">2</span>: Favorites</div>
<div class="t" style="left:2724.60px;top:199.00px;font-family:'Liberation Sans';font-size:23px;transform:rotate(90deg) scaleX(0.8761);"><span class="u">4</span>: Run</div>
<div class="t" style="left:1340.00px;top:164.00px;font-family:'Liberation Sans';font-size:16px;transform:scaleX(0.9444);">4</div>
</body></html>
